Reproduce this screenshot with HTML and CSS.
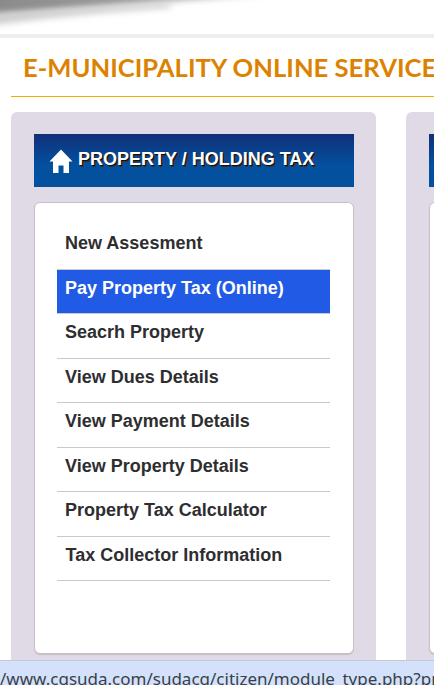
FILE: index.html
```html
<!DOCTYPE html>
<html lang="en">
<head>
<meta charset="utf-8">
<title>E-Municipality Online Services</title>
<link rel="stylesheet" href="styles.css">
</head>
<body>
<div class="page">
  <div class="banner">
    <svg class="swoosh" width="434" height="34" viewBox="0 0 434 34">
      <defs>
        <linearGradient id="sw" x1="0" y1="0" x2="1" y2="0">
          <stop offset="0" stop-color="#888888"/>
          <stop offset="0.4" stop-color="#9c9c9c"/>
          <stop offset="0.75" stop-color="#bcbcbc"/>
          <stop offset="1" stop-color="#ffffff"/>
        </linearGradient>
        <filter id="soft" x="-5%" y="-60%" width="110%" height="220%"><feGaussianBlur stdDeviation="5 3"/></filter>
      </defs>
      <path d="M-20 -12H340C240 -2 100 4 -20 18Z" fill="url(#sw)" filter="url(#soft)"/>
      <path d="M-20 14C40 10 90 8 170 3V8C90 13 30 20 -20 27Z" fill="#cfcfcf" filter="url(#soft)"/>
    </svg>
  </div>
  <div class="heading-wrap">
    <h1 class="heading">E-MUNICIPALITY ONLINE SERVICES</h1>
  </div>
  <div class="panels">
    <section class="panel">
      <h2 class="panel-title">
        <svg class="home" width="24" height="24" viewBox="0 0 24 24"><path d="M12 0.5 23.5 12.5H20V24H14.5V16.5H9.5V24H4V12.5H0.5Z" fill="#fff"/></svg>
        <span>PROPERTY / HOLDING TAX</span>
      </h2>
      <div class="card">
        <ul class="menu">
          <li class="item"><a>New Assesment</a></li>
          <li class="item active"><a>Pay Property Tax (Online)</a></li>
          <li class="item"><a>Seacrh Property</a></li>
          <li class="item"><a>View Dues Details</a></li>
          <li class="item"><a>View Payment Details</a></li>
          <li class="item"><a>View Property Details</a></li>
          <li class="item"><a>Property Tax Calculator</a></li>
          <li class="item shifted"><a>Tax Collector Information</a></li>
        </ul>
      </div>
    </section>
    <section class="panel">
      <div class="panel-title"></div>
      <div class="card"></div>
    </section>
  </div>
</div>
<div class="status">/www.cgsuda.com/sudacg/citizen/module_type.php?pr</div>
</body>
</html>
```
FILE: styles.css
```css
* { box-sizing: border-box; }
html, body { margin: 0; height: 100%; overflow: hidden; background: #fff; }
.page { width: 434px; height: 685px; overflow: hidden; }
.banner { height: 38px; border-bottom: 4px solid #eeeeee; background: #fff; }
.swoosh { display: block; }
.heading-wrap { margin-left: 11px; height: 59px; border-bottom: 1px solid #f0ad00; padding: 12px 0 0 12px; }
.heading { margin: 0; font: 700 25.6px/34px "Lato", sans-serif; color: #dc8200; white-space: nowrap; }
.panels { display: flex; gap: 30px; margin: 15px 0 0 11px; width: 800px; }
.panel { flex: 0 0 365px; height: 560px; padding: 22px 22px 0 23px; border-radius: 6px; background: #e0dae7; }
.panel-title { display: flex; align-items: flex-start; height: 53px; margin: 0 0 15px; padding: 15px 0 0 15px; background: linear-gradient(#113078 0, #03509f 60%, #03509f 100%); color: #fff; font: 700 18px/20px "Liberation Sans", sans-serif; text-shadow: 1px 1px 0 #111, 2px 2px 0 #333; }
.home { margin: 0 5px 0 0; flex: none; }
.card { height: 452px; padding: 22px 23px 0 22px; background: #fff; border: 1px solid #cbbfc4; border-radius: 6px; box-shadow: 0 1px 1px #c5bcc5; }
.menu { margin: 0; padding: 0; list-style: none; }
.item { height: 44.5px; padding: 0 8px; border-bottom: 1px solid #c9c9cc; font: 700 18px/36px "Liberation Sans", sans-serif; color: #2e2e30; }
.active { background: #215be5; color: #fff; line-height: 37px; }
.shifted { padding-left: 8.5px; }
.status { position: fixed; left: 0; right: 0; bottom: 0; height: 25px; padding-top: 5px; overflow: hidden; background: #d3e2fa; border-top: 1px solid #c8c8d0; color: #3a3f4a; font: 400 17px/25px "Noto Sans", sans-serif; white-space: nowrap; }
```
